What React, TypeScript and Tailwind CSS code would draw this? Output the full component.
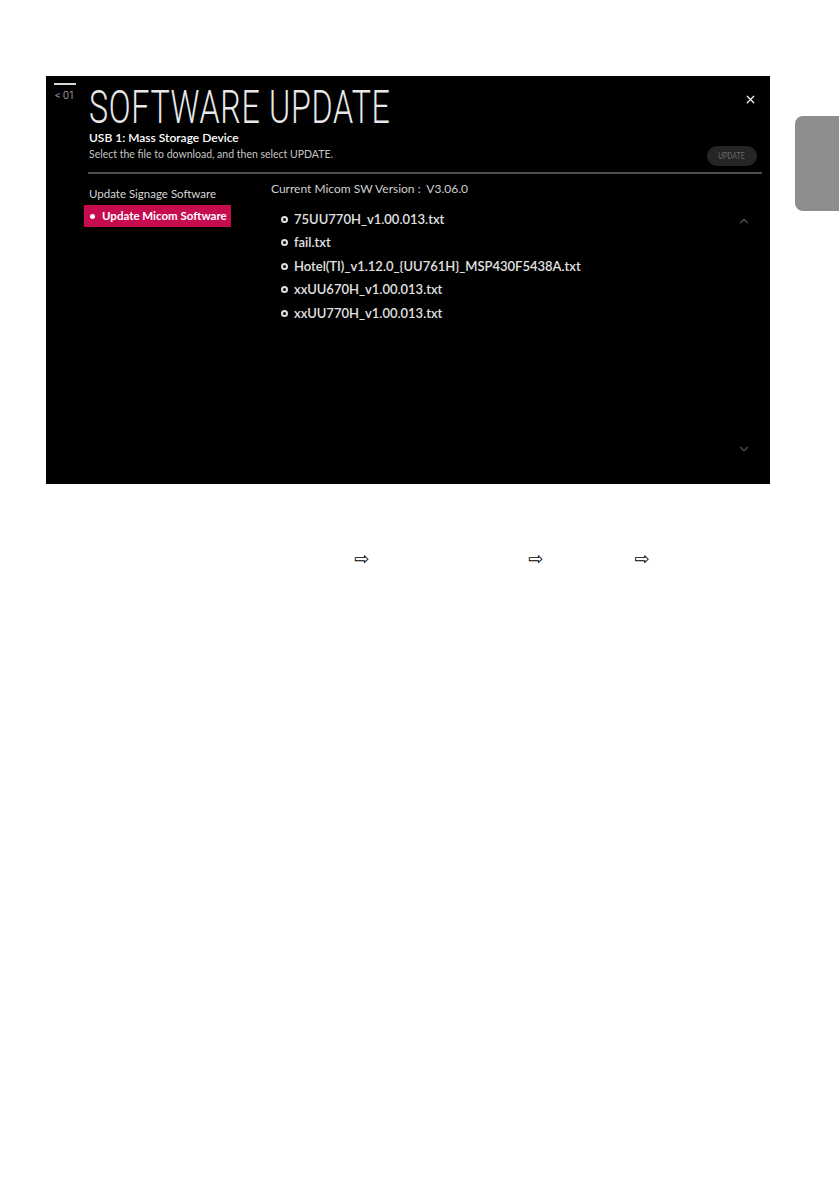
import { ChevronDown, ChevronUp, X } from "lucide-react";

const files = [
  "75UU770H_v1.00.013.txt",
  "fail.txt",
  "Hotel(TI)_v1.12.0_{UU761H}_MSP430F5438A.txt",
  "xxUU670H_v1.00.013.txt",
  "xxUU770H_v1.00.013.txt",
];

export default function App() {
  return (
    <div className="w-[839px] h-[1191px] bg-white overflow-hidden font-['Lato',sans-serif]">
      {/* top: screen + side tab */}
      <div className="flex items-start pt-[76px]">
        <div className="ml-[46px] w-[724px] h-[408px] bg-black flex flex-col">
          {/* Header */}
          <div className="flex items-start">
            <div className="ml-[8px] mt-[7px] w-[22px] flex flex-col">
              <div className="h-[2px] bg-[#d6d6d6]" />
              <span className="mt-[6px] ml-[1px] text-[10.5px] leading-none text-[#d0d0d0] font-['Roboto',sans-serif] font-light">
                &lt; 01
              </span>
            </div>
            <div className="ml-[13px] flex-1 flex flex-col">
              <h1 className="mt-[8px] h-[46px] text-[46px] leading-none text-[#e8e8e8] font-['Roboto',sans-serif] font-light origin-left scale-x-[0.7] whitespace-nowrap tracking-[1px]">
                SOFTWARE UPDATE
              </h1>
              <div className="mt-[2px] text-[12px] leading-none font-semibold text-white">
                USB 1: Mass Storage Device
              </div>
              <div className="mt-[5px] text-[10.5px] leading-none text-[#c4c4c4]">
                Select the file to download, and then select UPDATE.
              </div>
            </div>
            <div className="flex flex-col items-end pr-[13px]">
              <X className="mt-[17px] w-[13px] h-[13px] text-white" strokeWidth={2.2} />
              <div className="mt-[40px] w-[50px] h-[20px] rounded-full bg-[#252525] flex items-center justify-center">
                <span className="text-[9px] leading-none text-[#6a6a6a] font-['Roboto',sans-serif] scale-x-[0.8]">
                  UPDATE
                </span>
              </div>
            </div>
          </div>

          {/* divider */}
          <div className="mt-[6px] ml-[42px] mr-[8px] h-[2px] bg-[#4d4d4d]" />

          {/* body */}
          <div className="flex flex-1">
            <div className="w-[225px] pl-[38px] pt-[14px] flex flex-col">
              <div className="ml-[5px] text-[11.5px] leading-none text-[#d6d6d6]">Update Signage Software</div>
              <div className="mt-[5.5px] w-[147px] h-[22px] bg-[#c70b4f] flex items-center pl-[6px]">
                <span className="w-[5px] h-[5px] rounded-full bg-white" />
                <span className="ml-[7px] text-[11.5px] leading-none font-bold text-white">Update Micom Software</span>
              </div>
            </div>
            <div className="flex-1 pt-[9px] flex flex-col">
              <div className="text-[12px] leading-none text-[#d0d0d0] whitespace-pre">
                Current Micom SW Version :  V3.06.0
              </div>
              <div className="mt-[17px] flex flex-col gap-[9.5px]">
                {files.map((f) => (
                  <div key={f} className="flex items-center ml-[10px] h-[14px]">
                    <span className="w-[7px] h-[7px] rounded-full border-2 border-[#e0e0e0]" />
                    <span className="ml-[6px] text-[13px] leading-none font-semibold text-[#e2e2e2] whitespace-nowrap">
                      {f}
                    </span>
                  </div>
                ))}
              </div>
            </div>
            <div className="w-[54px] flex flex-col items-start pl-[21px] pt-[40px] pb-[28px]">
              <ChevronUp className="w-[14px] h-[14px] text-[#4a4a4a]" strokeWidth={2.5} />
              <ChevronDown className="mt-auto w-[14px] h-[14px] text-[#4a4a4a]" strokeWidth={2.5} />
            </div>
          </div>
        </div>
        <div className="ml-auto mt-[40px] w-[44px] h-[95px] rounded-l-[8px] bg-[#8f8d8d]" />
      </div>

      {/* arrows row */}
      <div className="mt-[66px] flex items-center text-[18px] leading-none text-black font-['DejaVu_Sans',sans-serif]">
        <span className="ml-[354px]">⇨</span>
        <span className="ml-[159px]">⇨</span>
        <span className="ml-[91px]">⇨</span>
      </div>
    </div>
  );
}
